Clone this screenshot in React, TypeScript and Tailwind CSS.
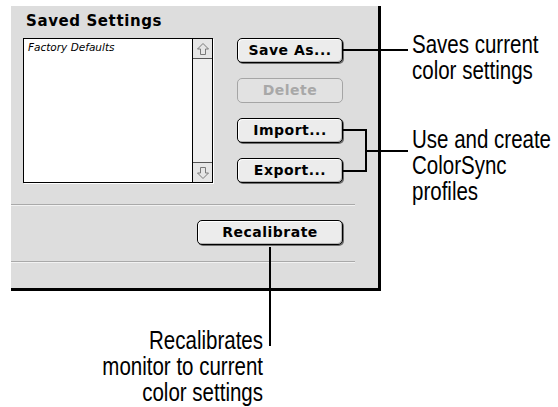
import React from 'react';

const chicago = "font-['DejaVu_Sans',sans-serif] font-bold";
const helv = "font-['Liberation_Sans',Arial,sans-serif] text-[25px] leading-[26px] text-black whitespace-nowrap";

const MacButton: React.FC<{ label: string; width: string; disabled?: boolean }> = ({ label, width, disabled }) => (
  <div
    className={`${width} h-[25px] flex items-center justify-center rounded-[5px] border ${
      disabled
        ? 'border-[#a5a5a5] text-[#a8a8a8] bg-[#e2e2e2]'
        : 'border-black text-black bg-[#ececec] shadow-[1px_1px_0_#6f6f6f,inset_1px_1px_0_#ffffff,inset_-1px_-1px_0_#b5b5b5]'
    } ${chicago} text-[14px] tracking-[0.5px]`}
  >
    {label}
  </div>
);

const Arrow: React.FC<{ down?: boolean }> = ({ down }) => (
  <svg width="14" height="14" viewBox="0 0 14 14" className={down ? 'rotate-180' : ''}>
    <path d="M7 1.5 L12.5 7 H9.5 V12.5 H4.5 V7 H1.5 Z" fill="none" stroke="#7a7a7a" strokeWidth="1" />
  </svg>
);

export default function App() {
  return (
    <div className="relative w-[558px] h-[407px] bg-white overflow-hidden">
      <div className="flex">
        {/* dialog panel */}
        <div className="flex-none ml-[11px] mt-[6px] w-[370px] bg-[#dddddd] border-r-[3px] border-b-[3px] border-black">
          <div className={`pl-[15px] pt-[4px] h-[32px] ${chicago} text-[15px] tracking-[0.6px] text-black`}>
            Saved Settings
          </div>

          <div className="flex pl-[12px]">
            {/* list box */}
            <div className="flex w-[190px] h-[145px] border border-black shadow-[1px_1px_0_#ffffff]">
              <div className="flex-1 bg-white pl-[4px] pt-[2px] font-['DejaVu_Sans',sans-serif] italic text-[10.5px] leading-[13px]">
                Factory Defaults
              </div>
              <div className="w-[20px] flex flex-col border-l border-black bg-[#eeeeee]">
                <div className="h-[20px] flex items-center justify-center border-b border-[#555555] bg-[#e6e6e6]">
                  <Arrow />
                </div>
                <div className="flex-1" />
                <div className="h-[20px] flex items-center justify-center border-t border-[#555555] bg-[#e6e6e6]">
                  <Arrow down />
                </div>
              </div>
            </div>

            {/* buttons */}
            <div className="ml-[24px] flex flex-col gap-[15px]">
              <MacButton label="Save As..." width="w-[106px]" />
              <MacButton label="Delete" width="w-[106px]" disabled />
              <MacButton label="Import..." width="w-[106px]" />
              <MacButton label="Export..." width="w-[106px]" />
            </div>
          </div>

          <div className="mt-[21px] w-[344px] h-[2px] bg-[#a9a9a9] border-b border-[#f2f2f2]" />

          <div className="flex justify-end pr-[35px] pt-[14px] pb-[16px]">
            <MacButton label="Recalibrate" width="w-[146px]" />
          </div>

          <div className="w-[344px] h-[2px] bg-[#a9a9a9] border-b border-[#f2f2f2]" />
          <div className="h-[25px]" />
        </div>

        {/* right labels, condensed like Helvetica Narrow */}
        <div className={`flex-none ml-[31px] pt-[31px] origin-left scale-x-[0.82] ${helv}`}>
          <div>Saves current</div>
          <div>color settings</div>
          <div className="mt-[43px]">Use and create</div>
          <div>ColorSync</div>
          <div>profiles</div>
        </div>
      </div>

      {/* bottom label */}
      <div className={`w-[263px] mt-[36px] text-right origin-right scale-x-[0.82] ${helv}`}>
        <div>Recalibrates</div>
        <div>monitor to current</div>
        <div>color settings</div>
      </div>

      {/* leader lines */}
      <svg className="absolute inset-0 pointer-events-none" width="558" height="407">
        <g stroke="#000" strokeWidth="2" fill="none">
          <path d="M343 50 H408" />
          <path d="M343 130 H366 V171 H343" />
          <path d="M366 151 H408" />
          <path d="M270 247 V346" />
        </g>
      </svg>
    </div>
  );
}
